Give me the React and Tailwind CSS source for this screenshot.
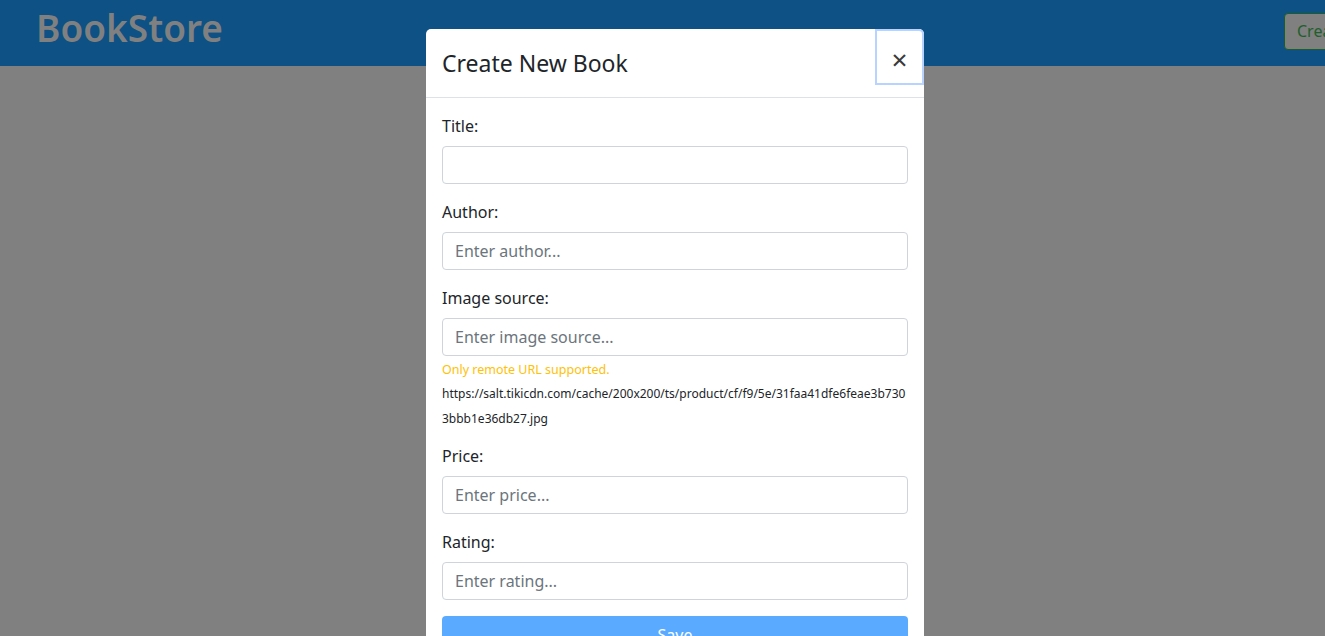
import React from 'react';

const font = { fontFamily: '"Noto Sans", "Open Sans", sans-serif' };

const Field = ({ label, placeholder, children, mb = 'mb-4' }) => (
  <div className={mb}>
    <label className="block mb-2 text-base leading-6 text-[#212529]">{label}</label>
    <input
      className="block w-full h-[38px] px-3 py-1.5 text-base text-[#495057] bg-white border border-[#ced4da] rounded placeholder:text-[#6c757d] outline-none"
      placeholder={placeholder}
    />
    {children}
  </div>
);

export default function App() {
  return (
    <div className="relative w-full h-[636px] overflow-hidden bg-[#808080]" style={font}>
      {/* page behind the backdrop, drawn dimmed */}
      <header className="flex items-center w-[1500px] h-[66px] bg-[#0d5185]">
        <div className="w-[1284px] pl-9">
          <h1 className="text-[37px] font-semibold leading-none text-[#808080] -mt-3">BookStore</h1>
        </div>
        <button className="h-[37px] px-3 border border-[#1b5e2a] rounded text-[#1f5f2d] text-base bg-[#808080] -mt-1">
          Create New Book
        </button>
      </header>

      {/* modal */}
      <div className="absolute left-[426px] top-[29px] w-[498px] bg-white rounded-t-[5px]">
        <div className="flex items-start h-[69px] border-b border-[#dee2e6] pl-4">
          <h4 className="flex-1 pt-4 text-[23px] leading-9 text-[#212529] font-normal">Create New Book</h4>
          <button className="w-[49px] h-[56px] border-2 border-[#b8d3ff] rounded-tr-[5px] text-[28px] leading-none font-normal text-[#3a3a3a] flex items-center justify-center pt-1">
            ×
          </button>
        </div>
        <div className="p-4">
          <Field label="Title:" placeholder="" />
          <Field label="Author:" placeholder="Enter author..." />
          <Field label="Image source:" placeholder="Enter image source..." mb="mb-[13px]">
            <small className="block mt-1 text-[12.5px] leading-[19px] text-[#ffc107]">Only remote URL supported.</small>
            <p className="mt-[2px] text-[12px] leading-[25px] text-[#212529] break-all">
              https://salt.tikicdn.com/cache/200x200/ts/product/cf/f9/5e/31faa41dfe6feae3b7303bbb1e36db27.jpg
            </p>
          </Field>
          <Field label="Price:" placeholder="Enter price..." />
          <Field label="Rating:" placeholder="Enter rating..." />
          <button className="w-full h-[38px] rounded bg-[#5aabff] text-white text-base">Save</button>
        </div>
      </div>
    </div>
  );
}
